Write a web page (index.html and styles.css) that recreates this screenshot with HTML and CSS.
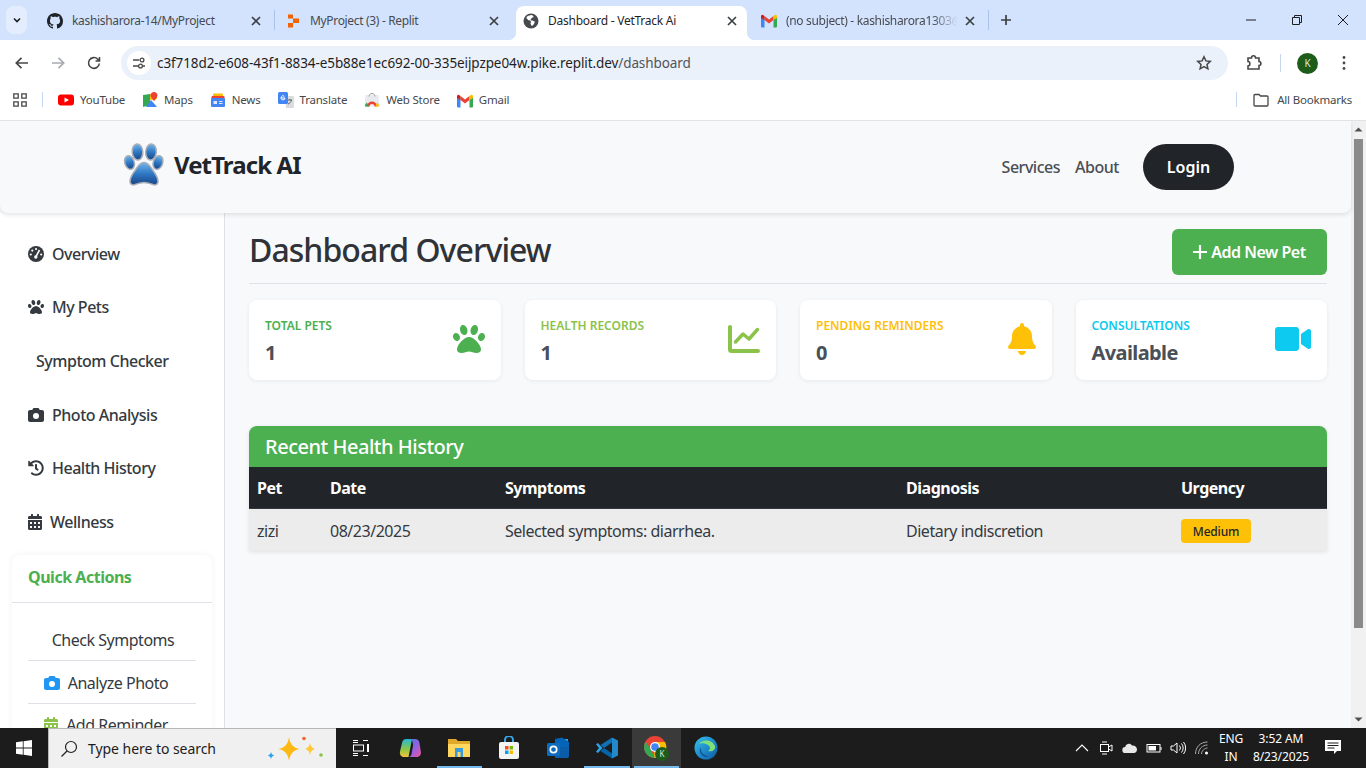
FILE: index.html
```html
<!DOCTYPE html>
<html lang="en">
<head>
<meta charset="utf-8">
<title>Dashboard - VetTrack Ai</title>
<link rel="stylesheet" href="styles.css">
</head>
<body>
<svg class="defs" aria-hidden="true">
  <symbol id="i-paw" viewBox="0 0 512 512"><path d="M256 224c-79.41 0-192 122.76-192 200.25 0 34.9 26.81 55.75 71.74 55.75 48.84 0 81.09-25.08 120.26-25.08 39.51 0 71.85 25.08 120.26 25.08 44.93 0 71.74-20.85 71.74-55.75C448 346.76 335.41 224 256 224zm-147.28-12.61c-10.4-34.65-42.44-57.09-71.56-50.13-29.12 6.96-44.29 40.69-33.89 75.34 10.4 34.65 42.44 57.09 71.56 50.13 29.12-6.96 44.29-40.69 33.89-75.34zm84.72-20.78c30.94-8.14 46.42-49.94 34.58-93.36s-46.52-72.01-77.46-63.87-46.42 49.94-34.58 93.36c11.84 43.42 46.52 72.02 77.46 63.87zm281.39-29.34c-29.12-6.96-61.15 15.48-71.56 50.13-10.4 34.65 4.77 68.38 33.89 75.34 29.12 6.96 61.15-15.48 71.56-50.13 10.4-34.65-4.77-68.38-33.89-75.34zm-156.27 29.34c30.94 8.14 65.62-20.45 77.46-63.87 11.84-43.42-3.64-85.21-34.58-93.36s-65.62 20.45-77.46 63.87c-11.84 43.42 3.64 85.22 34.58 93.36z"/></symbol>
  <symbol id="i-camera" viewBox="0 0 512 512"><path fill-rule="evenodd" d="M149.100 64.800 138.700 96H64C28.700 96 0 124.700 0 160v256c0 35.300 28.700 64 64 64h384c35.300 0 64-28.700 64-64V160c0-35.300-28.700-64-64-64h-74.700l-10.400-31.200C356.400 45.200 338.100 32 317.400 32H194.600c-20.700 0-39 13.200-45.500 32.800zM256 192a96 96 0 1 1 0 192 96 96 0 1 1 0-192z"/></symbol>
  <symbol id="i-bell" viewBox="0 0 448 512"><path d="M224 512c35.32 0 63.97-28.65 63.97-64H160.03c0 35.35 28.65 64 63.97 64zm215.39-149.71c-19.32-20.76-55.47-51.99-55.47-154.29 0-77.7-54.48-139.9-127.94-155.16V32c0-17.67-14.32-32-31.98-32s-31.98 14.33-31.98 32v20.84C118.56 68.1 64.08 130.3 64.08 208c0 102.3-36.15 133.53-55.47 154.29-6 6.45-8.66 14.16-8.61 21.71.11 16.4 12.98 32 32.1 32h383.8c19.12 0 32-15.6 32.1-32 .05-7.55-2.61-15.27-8.61-21.71z"/></symbol>
  <symbol id="i-video" viewBox="0 0 576 512"><path d="M336.2 64H47.8C21.4 64 0 85.4 0 111.8v288.4C0 426.6 21.4 448 47.8 448h288.4c26.4 0 47.8-21.4 47.8-47.8V111.8c0-26.4-21.4-47.8-47.8-47.8zm189.4 37.7L416 177.3v157.4l109.6 75.5c21.2 14.6 50.4-.3 50.4-25.8V127.5c0-25.4-29.1-40.4-50.4-25.8z"/></symbol>
  <symbol id="i-chart" viewBox="0 0 32 28"><path d="M2 2v22.500A1.500 1.500 0 0 0 3.500 26H30" fill="none" stroke="currentColor" stroke-width="4" stroke-linecap="round"/><path d="M7.500 17 15 9l6 5 8.500-9.500" fill="none" stroke="currentColor" stroke-width="3.500" stroke-linecap="round" stroke-linejoin="round"/></symbol>
  <symbol id="i-history" viewBox="0 0 512 512"><path d="M504 255.531c.253 136.64-111.18 248.372-247.82 248.468-59.015.042-113.223-20.53-155.822-54.911-11.077-8.94-11.905-25.541-1.839-35.607l11.267-11.267c8.609-8.609 22.353-9.551 31.891-1.984C173.062 425.135 212.781 440 256 440c101.705 0 184-82.311 184-184 0-101.705-82.311-184-184-184-48.814 0-93.149 18.969-126.068 49.932l50.754 50.754c10.08 10.08 2.941 27.314-11.313 27.314H24c-8.837 0-16-7.163-16-16V38.627c0-14.254 17.234-21.393 27.314-11.314l49.372 49.372C129.209 34.136 189.552 8 256 8c136.81 0 247.747 110.78 248 247.531zm-180.912 78.784l9.823-12.63c8.138-10.463 6.253-25.542-4.21-33.679L288 256.349V152c0-13.255-10.745-24-24-24h-16c-13.255 0-24 10.745-24 24v135.651l65.409 50.874c10.463 8.137 25.541 6.253 33.679-4.21z"/></symbol>
  <symbol id="i-cal" viewBox="0 0 448 512"><path d="M0 464c0 26.5 21.5 48 48 48h352c26.5 0 48-21.5 48-48V192H0v272zm320-196c0-6.6 5.4-12 12-12h40c6.6 0 12 5.4 12 12v40c0 6.6-5.4 12-12 12h-40c-6.6 0-12-5.4-12-12v-40zm0 128c0-6.6 5.4-12 12-12h40c6.6 0 12 5.4 12 12v40c0 6.6-5.4 12-12 12h-40c-6.6 0-12-5.4-12-12v-40zM192 268c0-6.6 5.4-12 12-12h40c6.6 0 12 5.4 12 12v40c0 6.6-5.4 12-12 12h-40c-6.6 0-12-5.4-12-12v-40zm0 128c0-6.6 5.4-12 12-12h40c6.6 0 12 5.4 12 12v40c0 6.6-5.4 12-12 12h-40c-6.6 0-12-5.4-12-12v-40zM64 268c0-6.6 5.4-12 12-12h40c6.6 0 12 5.4 12 12v40c0 6.6-5.4 12-12 12H76c-6.6 0-12-5.4-12-12v-40zm0 128c0-6.6 5.4-12 12-12h40c6.6 0 12 5.4 12 12v40c0 6.6-5.4 12-12 12H76c-6.6 0-12-5.4-12-12v-40zM400 64h-48V16c0-8.8-7.2-16-16-16h-32c-8.8 0-16 7.2-16 16v48H160V16c0-8.8-7.2-16-16-16h-32c-8.8 0-16 7.2-16 16v48H48C21.5 64 0 85.5 0 112v48h448v-48c0-26.5-21.5-48-48-48z"/></symbol>
  <symbol id="i-gmail" viewBox="0 0 16 13"><path fill="#4285f4" d="M0 2v10a1 1 0 0 0 1 1h2.500V5.500z"/><path fill="#34a853" d="M12.500 5.500V13H15a1 1 0 0 0 1-1V2z"/><path fill="#ea4335" d="M3.500 5.500 8 8.900l4.500-3.400V1.500L8 4.900 3.500 1.500z"/><path fill="#c5221f" d="M0 2v1.500l3.500 2v-4L2 .4C1.100-.3 0 .4 0 2z"/><path fill="#fbbc04" d="M16 2v1.500l-3.500 2v-4L14 .4c.9-.7 2-.000 2 1.600z"/></symbol>
  <symbol id="i-close" viewBox="0 0 10 10"><path d="M1 1l8 8M9 1l-8 8" fill="none" stroke="currentColor" stroke-width="1.700"/></symbol>
</svg>

<div class="browser">
  <div class="tabstrip">
    <div class="tabmenu"><svg class="ic10" viewBox="0 0 10 10"><path d="M2 3.500 5 6.500 8 3.500" fill="none" stroke="#1f1f1f" stroke-width="1.600"/></svg></div>
    <div class="tabs">
      <div class="tab">
        <svg class="fav" viewBox="0 0 16 16"><path fill="#1f2328" d="M8 0C3.580 0 0 3.580 0 8c0 3.540 2.290 6.530 5.470 7.590.4.070.55-.17.55-.38 0-.19-.01-.82-.01-1.490-2.010.37-2.530-.49-2.690-.94-.09-.23-.48-.94-.82-1.130-.28-.15-.68-.52-.01-.53.63-.01 1.080.58 1.230.82.72 1.210 1.870.87 2.330.66.070-.52.28-.87.51-1.070-1.780-.2-3.640-.89-3.640-3.950 0-.87.31-1.590.82-2.150-.08-.2-.36-1.020.08-2.120 0 0 .67-.21 2.200.82.64-.18 1.320-.27 2-.27.68 0 1.360.09 2 .27 1.530-1.040 2.200-.82 2.200-.82.44 1.100.16 1.920.08 2.120.51.56.82 1.270.82 2.150 0 3.070-1.870 3.750-3.650 3.950.29.25.54.73.54 1.480 0 1.070-.01 1.930-.01 2.200 0 .21.15.46.55.38A8.013 8.013 0 0 0 16 8c0-4.420-3.580-8-8-8z"/></svg>
        <span class="tabtitle">kashisharora-14/MyProject</span>
        <svg class="tabx"><use href="#i-close"/></svg>
      </div>
      <div class="tab tab-sep">
        <svg class="fav" viewBox="0 0 16 16"><path fill="#f26207" d="M3 1.500h5v4H3zM8 5.500h6v4.500H8zM3 10h5v4.500H3z"/></svg>
        <span class="tabtitle">MyProject (3) - Replit</span>
        <svg class="tabx"><use href="#i-close"/></svg>
      </div>
      <div class="tab tab-active">
        <svg class="fav" viewBox="0 0 16 16"><circle cx="8" cy="8" r="7.500" fill="#45494e"/><path fill="#fff" d="M7.300 2.200 4.500 3 3.200 5l2.300 2.200 1.700.2.900 1.500-.7 1.300 1 2.500 1.500-.2 1.600-2.400.2-1.600-2.300-1-1.300-.1-.6-1.200 1-.6.800-1 1.300-.4-.5-1.400-1.500-.7z"/></svg>
        <span class="tabtitle">Dashboard - VetTrack Ai</span>
        <svg class="tabx"><use href="#i-close"/></svg>
      </div>
      <div class="tab">
        <svg class="fav"><use href="#i-gmail"/></svg>
        <span class="tabtitle tabtitle-fade">(no subject) - kashisharora1303@gmail.com</span>
        <svg class="tabx"><use href="#i-close"/></svg>
      </div>
    </div>
    <span class="tabdiv"></span>
    <svg class="newtab" viewBox="0 0 12 12"><path d="M6 1v10M1 6h10" fill="none" stroke="#3c4043" stroke-width="1.700"/></svg>
    <div class="winctl">
      <svg class="wbtn" viewBox="0 0 46 12"><path d="M18 6h10" stroke="#1f1f1f" fill="none"/></svg>
      <svg class="wbtn" viewBox="0 0 46 12"><path d="M18.500 3.500h7v7h-7zM20.500 3.500v-2h7v7h-2" stroke="#1f1f1f" fill="none"/></svg>
      <svg class="wbtn" viewBox="0 0 46 12"><path d="M18 1l10 10M28 1 18 11" stroke="#1f1f1f" fill="none"/></svg>
    </div>
  </div>

  <div class="toolbar">
    <svg class="navic" viewBox="0 0 16 16"><path d="M14 8H2.500M7.500 2.800 2.300 8l5.200 5.200" fill="none" stroke="#474747" stroke-width="1.700"/></svg>
    <svg class="navic" viewBox="0 0 16 16"><path d="M2 8h11.500M8.500 2.800 13.700 8l-5.200 5.200" fill="none" stroke="#a8abb0" stroke-width="1.700"/></svg>
    <svg class="navic" viewBox="0 0 16 16"><path d="M13.300 8.500A5.400 5.400 0 1 1 11.800 4.200L13.500 6M13.500 2v4h-4" fill="none" stroke="#474747" stroke-width="1.600"/></svg>
    <div class="omnibox">
      <span class="sitechip"><svg class="ic14" viewBox="0 0 14 14"><path d="M1 4h6M11 10h2M1 10h5" fill="none" stroke="#474747" stroke-width="1.300"/><circle cx="10" cy="4" r="1.900" fill="none" stroke="#474747" stroke-width="1.300"/><circle cx="8.500" cy="10" r="1.900" fill="none" stroke="#474747" stroke-width="1.300"/></svg></span>
      <span class="url">c3f718d2-e608-43f1-8834-e5b88e1ec692-00-335eijpzpe04w.pike.replit.dev<span class="url-path">/dashboard</span></span>
      <svg class="star" viewBox="0 0 16 16"><path d="M8 1.800l1.900 4.100 4.400.5-3.300 3 .9 4.400L8 11.600l-3.900 2.200.9-4.400-3.300-3 4.400-.5z" fill="none" stroke="#474747" stroke-width="1.500"/></svg>
    </div>
    <svg class="ext" viewBox="0 0 18 18"><path d="M3 4h3.500c0-3 4-3 4 0H14v3.500c2.500 0 2.500 4 0 4V15H3v-3c2.500 0 2.500-4.500 0-4.500z" fill="none" stroke="#474747" stroke-width="1.600"/></svg>
    <span class="tooldiv"></span>
    <span class="avatar">K</span>
    <svg class="kebab" viewBox="0 0 4 16"><circle cx="2" cy="2.500" r="1.400"/><circle cx="2" cy="8" r="1.400"/><circle cx="2" cy="13.500" r="1.400"/></svg>
  </div>

  <div class="bookmarks">
    <svg class="apps" viewBox="0 0 14 14"><path d="M.8.800h4.400v4.400H.8zM8.800.800h4.400v4.400H8.800zM.8 8.800h4.400v4.400H.8zM8.800 8.800h4.400v4.400H8.800z" fill="none" stroke="#474747" stroke-width="1.300"/></svg>
    <span class="bmdiv"></span>
    <span class="bm bm-yt"><svg class="bmic" viewBox="0 0 16 16"><rect y="2.500" width="16" height="11" rx="3" fill="#f00"/><path d="M6.500 5.500v5L11 8z" fill="#fff"/></svg>YouTube</span>
    <span class="bm"><svg class="bmic" viewBox="0 0 16 16"><path fill="#34a853" d="M1 3l7-1v11l-7 2z"/><path fill="#4285f4" d="M4 15l5-7 6 7z"/><path fill="#fbbc04" d="M8 2l7 0v5l-7 1z"/><path fill="#ea4335" d="M12 0c2 0 3.500 1.500 3.500 3.200 0 2-2.300 3.800-3.500 6-1.200-2.200-3.500-4-3.500-6C8.500 1.500 10 0 12 0z"/></svg>Maps</span>
    <span class="bm"><svg class="bmic" viewBox="0 0 16 16"><rect x="3" y="1.500" width="10" height="5" rx="1" fill="#fbbc04"/><rect x="1.500" y="4" width="13" height="4" rx="1" fill="#ea4335"/><rect x="1" y="6" width="14" height="9" rx="1" fill="#4285f4"/><path d="M3.500 9h3.500v3H3.500zM9 9h3.500v1H9zM9 11h3.500v1H9z" fill="#dfe9fb"/></svg>News</span>
    <span class="bm"><svg class="bmic" viewBox="0 0 16 16"><path fill="#dadce0" d="M7 4h8a1 1 0 0 1 1 1v10a1 1 0 0 1-1 1H8z"/><rect width="10" height="12" rx="1.500" fill="#4285f4"/><path d="M3 6h4a2 2 0 1 1-.7-1.700" fill="none" stroke="#fff" stroke-width="1"/><path d="M10 8h4M12 7v1M13.500 8c-.5 2-2 3.500-3.500 4" fill="none" stroke="#5f6368"/></svg>Translate</span>
    <span class="bm"><svg class="bmic" viewBox="0 0 16 16"><path fill="#e8eaed" d="M1.500 3h13l1 11.500H.5z"/><path fill="none" stroke="#9aa0a6" d="M5 4.500c0-4 6-4 6 0"/><path fill="#ea4335" d="M3 14.500a5 5 0 0 1 10 0h-2.500a2.500 2.500 0 0 0-5 0z"/><path fill="#34a853" d="M1 14.500a4 4 0 0 1 2-4l2 4z"/><path fill="#fbbc04" d="M15 14.500a4 4 0 0 0-2-4l-2 4z"/></svg>Web Store</span>
    <span class="bm"><svg class="bmic"><use href="#i-gmail" y="1"/></svg>Gmail</span>
    <span class="bmdiv bmdiv-end"></span>
    <svg class="folder" viewBox="0 0 16 14"><path d="M1 2.500a1 1 0 0 1 1-1h4l1.500 1.500H14a1 1 0 0 1 1 1V12a1 1 0 0 1-1 1H2a1 1 0 0 1-1-1z" fill="none" stroke="#474747" stroke-width="1.300"/></svg>
    <span class="bm bm-all">All Bookmarks</span>
  </div>
</div>

<div class="viewport">
  <div class="page">
    <header class="topnav">
      <div class="brand">
        <svg class="logo" viewBox="0 0 42 44">
          <defs>
            <linearGradient id="lg" x1="0" y1="0" x2="0" y2="1"><stop offset="0" stop-color="#6fb6ea"/><stop offset=".5" stop-color="#2f78c4"/><stop offset="1" stop-color="#1a4486"/></linearGradient>
          </defs>
          <g class="logo-shape">
            <ellipse cx="6.500" cy="20.500" rx="4.700" ry="7" transform="rotate(-18 6.500 20.500)"/>
            <ellipse cx="14.500" cy="10" rx="5.300" ry="8" transform="rotate(-5 14.500 10)"/>
            <ellipse cx="28" cy="10" rx="5.300" ry="8" transform="rotate(5 28 10)"/>
            <ellipse cx="35" cy="20.500" rx="4.700" ry="7" transform="rotate(18 35 20.500)"/>
            <path d="M21 20.500c3 0 6 3 9 8 3 4 5 8 5 11 0 3-3 4-5 3-3-1-6-2-9-2s-6 1-9 2c-2 1-5 0-5-3 0-3 2-7 5-11 3-5 6-8 9-8z"/>
          </g>
        </svg>
        <span class="brand-name">VetTrack AI</span>
      </div>
      <nav class="topmenu">
        <a class="toplink">Services</a>
        <a class="toplink">About</a>
        <a class="login">Login</a>
      </nav>
    </header>
    <div class="content">
      <aside class="sidebar">
        <ul class="sidenav">
          <li class="sideitem"><svg class="sideic" viewBox="0 0 16 16"><circle cx="8" cy="8" r="8" fill="#343a40"/><circle cx="8" cy="3" r="1.100" fill="#fff"/><circle cx="4.300" cy="4.600" r="1.100" fill="#fff"/><circle cx="2.800" cy="8.500" r="1.100" fill="#fff"/><circle cx="13.200" cy="8.500" r="1.100" fill="#fff"/><path d="M8 10.500 11.500 4" stroke="#fff" stroke-width="1.600" fill="none"/><circle cx="7.800" cy="11" r="1.700" fill="#fff"/></svg>Overview</li>
          <li class="sideitem"><svg class="sideic"><use href="#i-paw"/></svg>My Pets</li>
          <li class="sideitem sideitem-noicon">Symptom Checker</li>
          <li class="sideitem"><svg class="sideic"><use href="#i-camera"/></svg>Photo Analysis</li>
          <li class="sideitem"><svg class="sideic"><use href="#i-history"/></svg>Health History</li>
          <li class="sideitem"><svg class="sideic sideic-cal"><use href="#i-cal"/></svg>Wellness</li>
        </ul>
        <section class="quick">
          <h3 class="quick-title">Quick Actions</h3>
          <div class="quick-list">
            <a class="quick-item">Check Symptoms</a>
            <a class="quick-item quick-item-icon"><svg class="qic qic-blue"><use href="#i-camera"/></svg>Analyze Photo</a>
            <a class="quick-item quick-item-icon"><svg class="qic qic-green"><use href="#i-cal"/></svg>Add Reminder</a>
          </div>
        </section>
      </aside>
      <main class="main">
        <div class="headrow">
          <h1 class="title">Dashboard Overview</h1>
          <a class="addbtn"><svg class="plus" viewBox="0 0 14 14"><path d="M7 0v14M0 7h14" stroke="#fff" stroke-width="2.200" fill="none"/></svg>Add New Pet</a>
        </div>
        <div class="stats">
          <div class="stat">
            <div class="stat-text"><div class="stat-label c-green">TOTAL PETS</div><div class="stat-value">1</div></div>
            <svg class="stat-ic c-green"><use href="#i-paw"/></svg>
          </div>
          <div class="stat">
            <div class="stat-text"><div class="stat-label c-lime">HEALTH RECORDS</div><div class="stat-value">1</div></div>
            <svg class="stat-ic stat-ic-chart c-lime"><use href="#i-chart"/></svg>
          </div>
          <div class="stat">
            <div class="stat-text"><div class="stat-label c-amber">PENDING REMINDERS</div><div class="stat-value">0</div></div>
            <svg class="stat-ic stat-ic-bell c-amber"><use href="#i-bell"/></svg>
          </div>
          <div class="stat">
            <div class="stat-text"><div class="stat-label c-cyan">CONSULTATIONS</div><div class="stat-value">Available</div></div>
            <svg class="stat-ic stat-ic-video c-cyan"><use href="#i-video"/></svg>
          </div>
        </div>
        <section class="history">
          <h2 class="history-title">Recent Health History</h2>
          <table class="htable">
            <colgroup><col class="c1"><col class="c2"><col class="c3"><col class="c4"><col class="c5"></colgroup>
            <thead><tr><th>Pet</th><th>Date</th><th>Symptoms</th><th>Diagnosis</th><th>Urgency</th></tr></thead>
            <tbody><tr><td>zizi</td><td>08/23/2025</td><td>Selected symptoms: diarrhea.</td><td>Dietary indiscretion</td><td><span class="badge">Medium</span></td></tr></tbody>
          </table>
        </section>
      </main>
    </div>
  </div>
  <div class="scrollbar">
    <svg class="sarrow" viewBox="0 0 15 17"><path d="M3.500 10.500 7.500 6.500l4 4z" fill="#505050"/></svg>
    <div class="sthumb"></div>
    <svg class="sarrow sarrow-end" viewBox="0 0 15 17"><path d="M3.500 6.500 7.500 10.500l4-4z" fill="#505050"/></svg>
  </div>
</div>

<footer class="taskbar">
  <div class="startbtn"><svg class="winlogo" viewBox="0 0 16 16"><path fill="#fff" d="M0 2.300 6.800 1.300V7.600H0zM7.600 1.200 16 0V7.600H7.600zM0 8.400H6.800V14.700L0 13.700zM7.600 8.400H16V16L7.600 14.800z"/></svg></div>
  <div class="searchbox">
    <svg class="searchic" viewBox="0 0 18 18"><circle cx="11" cy="7" r="5.500" fill="none" stroke="#222" stroke-width="1.200"/><path d="M7 11 1.500 16.500" stroke="#222" stroke-width="1.300"/></svg>
    <span class="searchtext">Type here to search</span>
    <svg class="sparkle" viewBox="0 0 60 28"><path fill="#fdb913" d="M26 2c1 7 4 11 11 12-7 1-10 5-11 12-1-7-4-11-11-12 7-1 10-5 11-12z"/><path fill="#fdc93a" d="M47 8c.5 3 2 5 5 6-3 .5-4.500 2.500-5 6-.5-3.500-2-5.500-5-6 3-1 4.500-3 5-6z"/><path fill="#2aa3ec" d="M8 17c.4 2 1.300 3 3.400 3.500-2 .5-3 1.500-3.400 3.500-.4-2-1.400-3-3.400-3.500 2-.5 3-1.500 3.400-3.500z"/><circle cx="41" cy="3.500" r="1.800" fill="#f0642c"/><circle cx="58" cy="20" r="1.800" fill="#8bc34a"/></svg>
  </div>
  <div class="tasks">
    <span class="task"><svg class="tic18" viewBox="0 0 18 18"><path d="M1 1.500h5M1 3.500h5M1 14.500h5M1 16.500h5M11 1.500h5M11 16.500h5" stroke="#fff" fill="none"/><rect x="1.500" y="6" width="10" height="6" fill="none" stroke="#fff"/><path d="M15 5v8h2V5z" fill="#fff"/></svg></span>
    <span class="task"><svg class="tic24" viewBox="0 0 24 24"><defs><linearGradient id="cp1" x1="0" y1="0" x2="0" y2="1"><stop offset="0" stop-color="#26b6d8"/><stop offset=".55" stop-color="#86c84a"/><stop offset="1" stop-color="#f5c23d"/></linearGradient><linearGradient id="cp2" x1="0" y1="0" x2="1" y2="1"><stop offset="0" stop-color="#3b7de0"/><stop offset=".55" stop-color="#9a5fe0"/><stop offset="1" stop-color="#f0569a"/></linearGradient></defs><path fill="url(#cp1)" d="M8 3h6l-3.500 18H6c-3 0-4.500-2.500-4-5.500L4 7c.5-2.500 2-4 4-4z"/><path fill="url(#cp2)" d="M12.500 3H17c2.500 0 4 1.500 4.500 4l1.300 8.500c.5 3-1 5.500-4 5.500H10c2 0 3.200-1.200 3.500-3l1.500-8c.3-2-.5-5.500-2.500-7z"/></svg></span>
    <span class="task task-open"><svg class="tic24" viewBox="0 0 24 24"><path fill="#e0a92c" d="M1 3h8l2 2h12v5H1z"/><path fill="#ffd75e" d="M1 8h22v13H1z"/><path fill="#3a9bdc" d="M8 12h8v9h-2.500v-5h-3v5H8z"/></svg></span>
    <span class="task"><svg class="tic24" viewBox="0 0 24 24"><path fill="none" stroke="#38a6e8" stroke-width="2" d="M8 7V4a4 4 0 0 1 8 0v3"/><rect x="2" y="6" width="20" height="17" rx="2" fill="#f4f4f4"/><path fill="#f25022" d="M8 10h3.500v3.500H8z"/><path fill="#7fba00" d="M12.500 10H16v3.500h-3.500z"/><path fill="#00a4ef" d="M8 14.500h3.500V18H8z"/><path fill="#ffb900" d="M12.500 14.500H16V18h-3.500z"/></svg></span>
    <span class="task"><svg class="tic24" viewBox="0 0 24 24"><path fill="#28a8ea" d="M9 3h13v8H9z"/><path fill="#0364b8" d="M9 3l7-1.500L23 6v5L9 11z"/><path fill="#0a5da8" d="M9 11h14v9a2 2 0 0 1-2 2H9z"/><rect x="1" y="7" width="13" height="13" rx="1.500" fill="#0f6cbd"/><circle cx="7.500" cy="13.500" r="3.200" fill="none" stroke="#fff" stroke-width="1.700"/></svg></span>
    <span class="task task-open"><svg class="tic24" viewBox="0 0 24 24"><path fill="#2489ca" d="M17 1.500 23 4.500v15l-6 3z"/><path fill="#1070b3" d="M17 1.500v5L9 12l-3.500-3z"/><path fill="#0065a9" d="M17 22.500v-5L9 12l-3.500 3z"/><path fill="#2ba0e8" d="M1 8.200 3 7l4.500 5L3 17l-2-1.200L4 12z"/></svg></span>
    <span class="task task-open task-active"><svg class="tic26" viewBox="0 0 26 26"><circle cx="12" cy="12" r="11" fill="#ea4335"/><path fill="#fbbc04" d="M12 7h10a11 11 0 0 1-11 16z"/><path fill="#34a853" d="M2.500 6.500 8 15l4 8A11 11 0 0 1 2.500 6.500z"/><circle cx="12" cy="12" r="5" fill="#fff"/><circle cx="12" cy="12" r="3.800" fill="#4285f4"/><circle cx="19" cy="19" r="7" fill="#1e5c1b"/><text x="19" y="22" class="chrome-k">K</text></svg></span>
    <span class="task"><svg class="tic24" viewBox="0 0 24 24"><defs><linearGradient id="ed" x1="0" y1="0" x2="1" y2="1"><stop offset="0" stop-color="#35c1f1"/><stop offset="1" stop-color="#0c59a4"/></linearGradient></defs><circle cx="12" cy="12" r="11.500" fill="url(#ed)"/><path fill="#7fe07a" d="M5 8c3-5 13-5 16 2 1 4-3 6-7 5 2-1 3-4 0-6-3-2-7-2-9-1z"/><path fill="#0c3f7d" d="M12 21c-5-1-8-6-5-10-1 5 3 9 7 9z" opacity=".7"/></svg></span>
  </div>
  <div class="tray">
    <svg class="tray-ic" viewBox="0 0 16 16"><path d="M2 11l6-6 6 6" fill="none" stroke="#fff" stroke-width="1.100"/></svg>
    <svg class="tray-ic" viewBox="0 0 16 16"><rect x="2.500" y="4.500" width="8" height="7" fill="none" stroke="#fff"/><path d="M10.500 7 14 5v6l-3.500-2" fill="none" stroke="#fff"/><path d="M4 2h5M4 14h5" stroke="#fff"/></svg>
    <svg class="tray-ic" viewBox="0 0 16 16"><path fill="#e8e8e8" d="M3.500 13a3 3 0 0 1-.3-6C4 4 8 2.500 10 5.500c2-.5 5 1 5 4 0 2-1.500 3.500-3 3.500z"/></svg>
    <svg class="tray-ic" viewBox="0 0 16 16"><rect x="1" y="4.500" width="13" height="7.500" fill="none" stroke="#fff"/><rect x="2.500" y="6" width="7.500" height="4.500" fill="#fff"/><path d="M15 7v3" stroke="#fff"/></svg>
    <svg class="tray-ic" viewBox="0 0 16 16"><path d="M1 6v4h2.500L7 13V3L3.500 6z" fill="none" stroke="#fff"/><path d="M9.500 5.500a4 4 0 0 1 0 5M11.500 3.500a7 7 0 0 1 0 9M13.500 2a9.500 9.500 0 0 1 0 12" fill="none" stroke="#fff"/></svg>
    <svg class="tray-ic" viewBox="0 0 16 16"><path d="M1.500 14c0-7 5-12 12-12M4.500 14c0-5 4-9 9-9M7.500 14c0-3 3-6 6-6" fill="none" stroke="#aaa"/><circle cx="12.500" cy="13" r="1.500" fill="#fff"/></svg>
    <div class="lang"><span>ENG</span><span>IN</span></div>
    <div class="clock"><span>3:52 AM</span><span>8/23/2025</span></div>
    <svg class="notif" viewBox="0 0 16 16"><path fill="#fff" d="M0 0h16v11h-4l-3 3v-3H0z"/><path d="M2.500 3h11M2.500 5.500h11M2.500 8h7" stroke="#1c1c1c"/></svg>
  </div>
</footer>
</body>
</html>
```

FILE: styles.css
```css
* { box-sizing: border-box; }
html, body { margin: 0; height: 100%; overflow: hidden; }
body {
  width: 1366px; height: 768px; display: flex; flex-direction: column;
  font-family: "Noto Sans", "Open Sans", sans-serif; color: #343a40; background: #fff;
}
.defs { display: none; }
.browser { flex: 0 0 121px; display: flex; flex-direction: column; background: #fff; letter-spacing: -.25px; }

/* tab strip */
.tabstrip { height: 40px; background: #d3e3fd; display: flex; align-items: flex-end; padding-left: 6px; }
.tabmenu { width: 21px; height: 28px; margin: 0 13px 6px 0; background: #e4edfd; border-radius: 8px; display: flex; align-items: center; justify-content: center; }
.ic10 { width: 10px; height: 10px; }
.tabs { display: flex; gap: 7px; width: 945px; }
.tab { width: 231px; height: 34px; display: flex; align-items: center; padding: 0 10px 4px 7px; position: relative; font-size: 12px; color: #474a50; letter-spacing: -.33px; }
.tab-sep::before { content: ""; position: absolute; left: -4px; top: 4px; width: 1px; height: 20px; background: #a9c5ef; }
.tab-active { background: #fff; color: #1f1f1f; border-radius: 8px 8px 0 0; letter-spacing: -.25px; }
.tab-active::before, .tab-active::after { content: ""; position: absolute; bottom: 0; width: 8px; height: 8px; }
.tab-active::before { left: -8px; background: radial-gradient(circle at 0 0, transparent 8px, #fff 8.500px); }
.tab-active::after { right: -8px; background: radial-gradient(circle at 100% 0, transparent 8px, #fff 8.500px); }
.fav { width: 16px; height: 16px; flex: none; margin-right: 9px; }
.tabtitle { flex: 1; white-space: nowrap; overflow: hidden; line-height: 16px; }
.tabtitle-fade { -webkit-mask-image: linear-gradient(90deg, #000 85%, transparent 100%); mask-image: linear-gradient(90deg, #000 85%, transparent 100%); }
.tabx { width: 10px; height: 10px; flex: none; margin-left: 7px; color: #3c4043; }
.tabdiv { width: 1px; height: 20px; background: #a9c5ef; margin: 0 0 10px 3px; }
.newtab { width: 12px; height: 12px; margin: 0 0 14px 11px; }
.winctl { margin-left: auto; display: flex; align-self: stretch; align-items: center; }
.wbtn { width: 46px; height: 12px; }

/* toolbar */
.toolbar { height: 40px; border-radius: 8px 8px 0 0; background: #fff; display: flex; align-items: center; padding: 6px 0 0 14px; position: relative; }
.navic { width: 16px; height: 16px; flex: none; margin-right: 20px; }
.navic:nth-child(3) { margin-right: 19px; }
.omnibox { flex: none; width: 1107px; height: 34px; border-radius: 17px; background: #ebf1fa; display: flex; align-items: center; padding: 0 16px 0 6px; font-size: 13.500px; }
.sitechip { width: 24px; height: 24px; border-radius: 50%; background: #fff; display: flex; align-items: center; justify-content: center; flex: none; margin-right: 6px; }
.ic14 { width: 14px; height: 14px; }
.url { color: #1f1f1f; white-space: nowrap; flex: 1; letter-spacing: -.09px; }
.url-path { color: #50545a; }
.star { width: 16px; height: 16px; flex: none; }
.ext { width: 18px; height: 18px; margin-left: 17px; flex: none; }
.tooldiv { width: 1px; height: 18px; background: #c7d6ee; margin-left: 17px; flex: none; }
.avatar { width: 21px; height: 21px; margin-left: 16px; border-radius: 50%; background: #1e5c1b; color: #dcebd9; font-size: 10px; display: flex; align-items: center; justify-content: center; flex: none; }
.kebab { width: 4px; height: 16px; margin-left: 24px; fill: #474747; flex: none; }

/* bookmarks */
.bookmarks { height: 41px; display: flex; align-items: center; padding: 0 0 1px 13px; border-bottom: 1px solid #e2e2e2; font-size: 11.500px; color: #45484c; letter-spacing: -.2px; }
.apps { width: 14px; height: 14px; flex: none; }
.bmdiv { width: 1px; height: 15px; background: #c7d6ee; margin: 0 15px; flex: none; }
.bm { display: flex; align-items: center; white-space: nowrap; margin-right: 17px; }
.bmic { width: 16px; height: 16px; margin-right: 6px; flex: none; }
.bmdiv-end { margin: 0 16px 0 auto; }
.folder { width: 16px; height: 14px; flex: none; margin-right: 8px; }
.bm-all { margin-right: 14px; }

/* page */
.viewport { flex: 1; display: flex; min-height: 0; overflow: hidden; }
.page { flex: 1; min-width: 0; display: flex; flex-direction: column; background: #f8f9fa; }
.page * { letter-spacing: -.03em; }
.topnav { flex: 0 0 92px; display: flex; align-items: center; justify-content: space-between; padding: 0 117px 0 123px; background: #f8f9fa; border-radius: 0 0 8px 8px; box-shadow: 0 2px 4px rgba(0,0,0,.1); position: relative; z-index: 2; }
.brand { display: flex; align-items: center; gap: 9px; margin-top: -6px; }
.logo { width: 42px; height: 44px; }
.logo-shape { fill: url(#lg); stroke: #a9aeb8; stroke-width: 1.500px; }
.brand-name { font-size: 24px; font-weight: 700; color: #212529; letter-spacing: -.038em; }
.topmenu { display: flex; align-items: center; }
.toplink { font-size: 16px; color: #4a4f55; font-weight: 500; margin-right: 16px; }
.toplink:first-child { margin-right: 15px; }
.login { width: 91px; height: 46px; border-radius: 23px; background: #212529; color: #fff; font-size: 16px; font-weight: 600; display: flex; align-items: center; justify-content: center; margin-left: 8px; letter-spacing: 0; }

.content { flex: 1; min-height: 0; display: flex; }
.sidebar { flex: 0 0 225px; background: #fff; border-right: 1px solid #dee2e6; padding: 14px 12px 0; overflow: hidden; }
.sidenav { list-style: none; margin: 0; padding: 0; }
.sideitem { height: 53.600px; display: flex; align-items: center; padding-left: 16px; font-size: 16px; font-weight: 500; color: #343a40; }
.sideitem-noicon { padding-left: 24px; }
.sideic { width: 16px; height: 16px; margin-right: 8px; fill: #343a40; flex: none; }
.sideic-cal { width: 14px; }
.quick { margin-top: 6px; width: 200px; box-shadow: 0 0 6px rgba(0,0,0,.06); border-radius: 8px; }
.quick-title { margin: 0; height: 48px; padding: 0 0 2px 16px; display: flex; align-items: center; font-size: 16px; font-weight: 700; color: #4caf50; border-bottom: 1px solid #dee2e6; }
.quick-list { padding: 16px 16px 0; }
.quick-item { height: 42.500px; display: flex; align-items: center; justify-content: center; padding: 2px 0 0 2px; border-bottom: 1px solid #dee2e6; font-size: 16px; color: #343a40; }
.quick-item-icon { padding-right: 14px; }
.qic { width: 16px; height: 16px; margin-right: 8px; flex: none; }
.qic-blue { fill: #2196f3; }
.qic-green { fill: #8bc34a; width: 14px; }

.main { flex: 1; min-width: 0; padding: 16px 24px 0; }
.headrow { height: 55px; display: flex; align-items: flex-start; justify-content: space-between; border-bottom: 1px solid #dee2e6; }
.title { margin: 0; font-size: 32px; line-height: 42px; font-weight: 500; color: #2f3338; }
.addbtn { width: 155px; height: 46px; display: flex; align-items: center; justify-content: center; gap: 4px; border-radius: 6px; background: #4caf50; color: #fff; font-size: 16px; font-weight: 600; }
.plus { width: 14px; height: 14px; }
.stats { display: grid; grid-template-columns: repeat(4, 1fr); gap: 24px; margin-top: 16px; }
.stat { height: 80px; padding: 0 16px; background: #fff; border-radius: 8px; box-shadow: 0 1px 4px rgba(0,0,0,.07); display: flex; align-items: center; justify-content: space-between; }
.stat-text { margin-top: 4px; }
.stat-label { font-size: 12px; font-weight: 600; line-height: 16px; letter-spacing: 0; }
.stat-value { margin-top: 6px; font-size: 20px; line-height: 26px; font-weight: 700; color: #495057; }
.stat-ic { width: 32px; height: 32px; fill: currentColor; flex: none; margin-top: -2px; }
.stat-ic-chart { height: 28px; }
.stat-ic-bell { width: 28px; }
.stat-ic-video { width: 36px; }
.c-green { color: #4caf50; }
.c-lime { color: #8bc34a; }
.c-amber { color: #ffc107; }
.c-cyan { color: #0dcaf0; }
.history { margin-top: 46px; border-radius: 8px 8px 0 0; overflow: hidden; box-shadow: 0 1px 4px rgba(0,0,0,.1); }
.history-title { margin: 0; height: 41px; padding-left: 16px; display: flex; align-items: center; background: #4caf50; color: #fff; font-size: 20px; font-weight: 500; letter-spacing: -.024em; }
.htable { width: 100%; border-collapse: collapse; table-layout: fixed; font-size: 16px; }
.c1 { width: 73px; } .c2 { width: 175px; } .c3 { width: 401px; } .c4 { width: 275px; } .c5 { width: 154px; }
.htable th { height: 42px; padding: 0 8px; text-align: left; background: #212529; color: #fff; font-weight: 700; box-shadow: inset 0 -1px 0 #32383e; }
.htable td { height: 42px; padding: 2px 8px 0; background: #ececec; color: #343a40; }
.badge { display: inline-flex; width: 70px; height: 24px; align-items: center; justify-content: center; border-radius: 4px; background: #ffc107; color: #212529; font-size: 12px; font-weight: 500; vertical-align: middle; letter-spacing: -.015em; }

/* scrollbar */
.scrollbar { flex: 0 0 15px; background: #f1f1f1; display: flex; flex-direction: column; align-items: center; }
.sarrow { width: 15px; height: 17px; flex: none; }
.sthumb { width: 9px; height: 489px; margin: 1px 0 0; background: #8a8a8a; flex: none; }
.sarrow-end { margin-top: auto; }

/* taskbar */
.taskbar { flex: 0 0 40px; background: #1c1c1c; display: flex; align-items: stretch; color: #fff; }
.startbtn { width: 48px; display: flex; align-items: center; justify-content: center; }
.winlogo { width: 16px; height: 16px; }
.searchbox { width: 288px; background: #f0f0f0; border-top: 1px solid #b8b8b8; border-left: 1px solid #b8b8b8; display: flex; align-items: center; padding-left: 11px; color: #1c1c1c; font-size: 14px; letter-spacing: -.05px; }
.searchic { width: 18px; height: 18px; flex: none; }
.searchtext { margin-left: 10px; flex: 1; }
.sparkle { width: 60px; height: 28px; flex: none; margin-right: 13px; }
.tasks { display: flex; align-items: stretch; }
.task { width: 49.300px; display: flex; align-items: center; justify-content: center; position: relative; }
.task-open::after { content: ""; position: absolute; left: 2px; right: 2px; bottom: 0; height: 2px; background: #76b9ed; }
.task-active { background: #3a3a3a; }
.tic18 { width: 18px; height: 18px; }
.tic24 { width: 24px; height: 24px; }
.tic26 { width: 26px; height: 26px; }
.chrome-k { font-size: 8px; fill: #dcebd9; text-anchor: middle; }
.tray { flex: 1; display: flex; align-items: center; justify-content: flex-end; font-size: 12px; letter-spacing: -.1px; }
.tray-ic { width: 16px; height: 16px; margin-right: 8px; flex: none; }
.lang { display: flex; flex-direction: column; align-items: center; line-height: 18px; width: 26px; }
.clock { display: flex; flex-direction: column; align-items: center; line-height: 18px; margin-left: 7px; width: 60px; }
.notif { width: 16px; height: 16px; margin: 0 25px 0 14px; flex: none; }
```
